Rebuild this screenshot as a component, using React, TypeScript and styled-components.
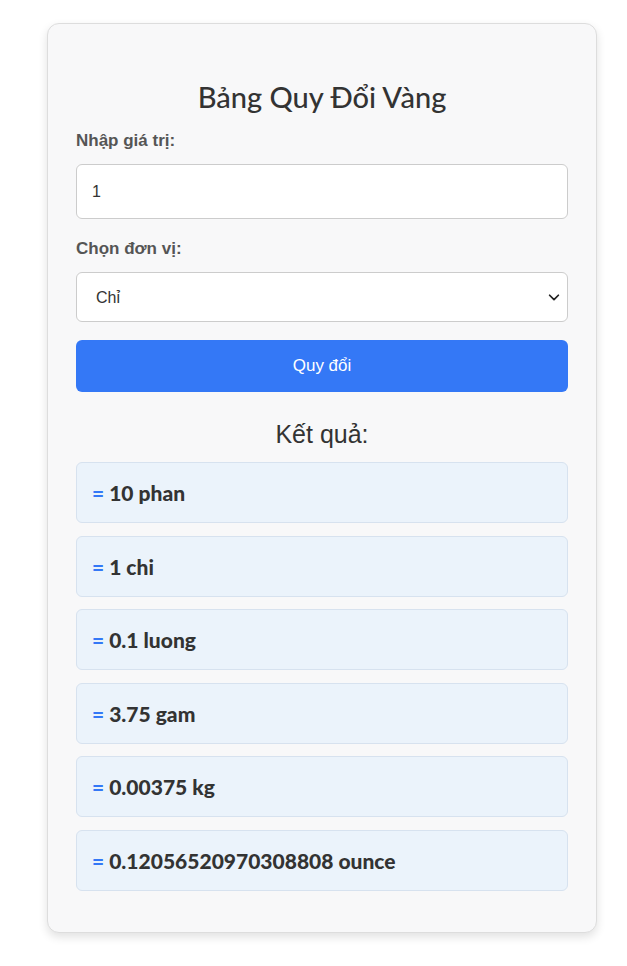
import styled, { createGlobalStyle } from 'styled-components';
import { useState } from 'react';

const GlobalStyle = createGlobalStyle`
  * { box-sizing: border-box; }
  body {
    margin: 0;
    background: #ffffff;
    font-family: 'Liberation Sans', Arial, sans-serif;
  }
`;

const Page = styled.div`
  padding: 23px 30px 32px 47px;
`;

const Card = styled.div`
  width: 550px;
  background: #f8f8f9;
  border: 1px solid #dddddd;
  border-radius: 12px;
  box-shadow: 0 4px 10px rgba(0, 0, 0, 0.12);
  padding: 55px 28px 28px;
`;

const Title = styled.h2`
  margin: 0 0 17px;
  text-align: center;
  font-family: Lato, 'Noto Sans', sans-serif;
  font-weight: 500;
  font-size: 29px;
  color: #333333;
`;

const Label = styled.label`
  display: block;
  font-weight: bold;
  font-size: 17px;
  line-height: 19px;
  color: #555555;
  margin-bottom: 14px;
`;

const Input = styled.input`
  display: block;
  width: 100%;
  height: 55px;
  padding: 0 15px;
  border: 1px solid #cccccc;
  border-radius: 6px;
  background: #ffffff;
  font-family: 'Liberation Sans', Arial, sans-serif;
  font-size: 16px;
  color: #333333;
  margin-bottom: 20px;
  outline: none;
`;

const SelectWrap = styled.div`
  position: relative;
  margin: 3px 0 18px;
`;

const Select = styled.select`
  display: block;
  width: 100%;
  height: 50px;
  padding: 0 19px;
  border: 1px solid #cccccc;
  border-radius: 6px;
  background: #ffffff;
  font-family: 'Liberation Sans', Arial, sans-serif;
  font-size: 16px;
  color: #333333;
  appearance: none;
  outline: none;
`;

const Chevron = styled.svg`
  position: absolute;
  right: 7px;
  top: 50%;
  transform: translateY(-50%);
  pointer-events: none;
`;

const Button = styled.button`
  display: block;
  width: 100%;
  height: 52px;
  border: none;
  border-radius: 6px;
  background: #3478f6;
  color: #ffffff;
  font-family: 'Liberation Sans', Arial, sans-serif;
  font-size: 17px;
  cursor: pointer;
`;

const ResultTitle = styled.h3`
  margin: 28px 0 13px;
  text-align: center;
  font-weight: normal;
  font-size: 25px;
  color: #333333;
`;

const ResultItem = styled.div`
  height: 61px;
  display: flex;
  align-items: center;
  padding: 0 15px;
  margin-bottom: 12.6px;
  background: #ebf3fb;
  border: 1px solid #d7e2ef;
  border-radius: 6px;
  font-family: Lato, 'Noto Sans', sans-serif;
  font-weight: 900;
  font-size: 21px;
  color: #333333;
`;

const Eq = styled.span`
  color: #3478f6;
  margin-right: 5px;
`;

const results = [
  '10 phan',
  '1 chi',
  '0.1 luong',
  '3.75 gam',
  '0.00375 kg',
  '0.12056520970308808 ounce',
];

export default function App() {
  const [value, setValue] = useState('1');
  const [unit, setUnit] = useState('chi');

  return (
    <>
      <GlobalStyle />
      <Page>
        <Card>
          <Title>Bảng Quy Đổi Vàng</Title>
          <Label>Nhập giá trị:</Label>
          <Input value={value} onChange={(e) => setValue(e.target.value)} />
          <Label>Chọn đơn vị:</Label>
          <SelectWrap>
            <Select value={unit} onChange={(e) => setUnit(e.target.value)}>
              <option value="phan">Phân</option>
              <option value="chi">Chỉ</option>
              <option value="luong">Lượng</option>
              <option value="gam">Gam</option>
              <option value="kg">Kg</option>
              <option value="ounce">Ounce</option>
            </Select>
            <Chevron width="14" height="14" viewBox="0 0 16 16" fill="none">
              <path d="M3 6l5 5 5-5" stroke="#222" strokeWidth="2" strokeLinecap="round" strokeLinejoin="round" />
            </Chevron>
          </SelectWrap>
          <Button>Quy đổi</Button>
          <ResultTitle>Kết quả:</ResultTitle>
          {results.map((r) => (
            <ResultItem key={r}>
              <Eq>=</Eq>
              {r}
            </ResultItem>
          ))}
        </Card>
      </Page>
    </>
  );
}
